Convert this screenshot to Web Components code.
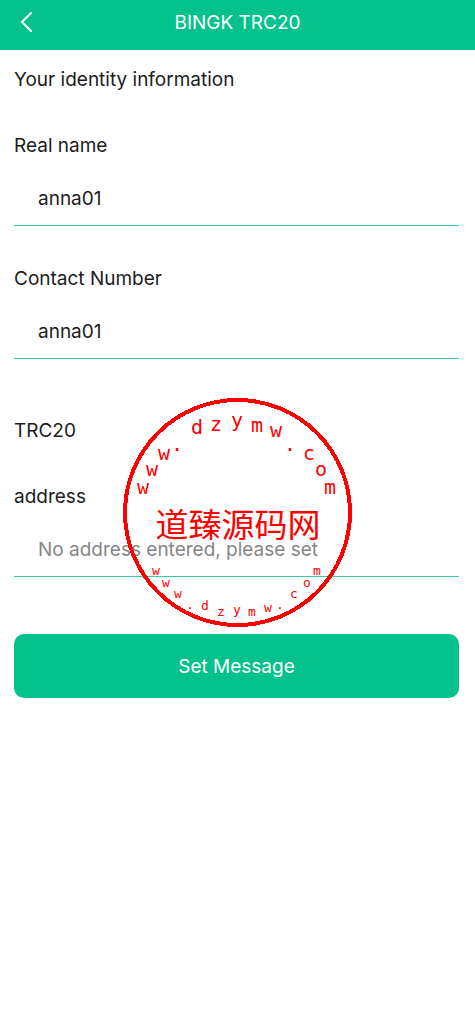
<!DOCTYPE html>
<html lang="en">
<head>
  <meta charset="UTF-8" />
  <meta name="viewport" content="width=device-width, initial-scale=1.0" />
  <title>BINGK TRC20</title>
  <style>
    body {
      margin: 0;
      background-color: #fff;
      color: #1c1c1c;
      font-family: Inter, "Noto Sans CJK SC", sans-serif;
      font-size: 19px;
      --main-color: #05c18b;
      --row-height: 60px;
    }
  </style>
</head>
<body>
  <wallet-page></wallet-page>

  <script>
    class NavBar extends HTMLElement {
      constructor() {
        super();
        this.shadowDOM = this.attachShadow({ mode: 'open' });
      }

      connectedCallback() {
        this.render();
      }

      render() {
        this.shadowDOM.innerHTML = `
          <style>
            :host {
              display: block;
              background-color: var(--main-color);
              color: #fff;
            }

            header {
              display: grid;
              grid-template-columns: 54px 1fr 54px;
              align-items: center;
              height: 50px;
              padding-bottom: 6px;
              box-sizing: border-box;
            }

            button {
              display: flex;
              justify-content: center;
              padding: 8px;
              border: none;
              background: none;
              color: inherit;
              cursor: pointer;
            }

            h1 {
              margin: 0;
              font-size: inherit;
              font-weight: 400;
              text-align: center;
            }
          </style>
          <header>
            <button type="button" aria-label="Back">
              <svg width="14" height="22" viewBox="0 0 14 22" fill="none" stroke="currentColor" stroke-width="2">
                <path d="M11 2 L2 11 L11 20" stroke-linecap="round" />
              </svg>
            </button>
            <h1><slot></slot></h1>
          </header>
        `;
      }
    }

    class FormField extends HTMLElement {
      constructor() {
        super();
        this.shadowDOM = this.attachShadow({ mode: 'open' });
      }

      connectedCallback() {
        this.render();
      }

      get value() {
        return this.shadowDOM.querySelector('#field-input').value;
      }

      render() {
        this.shadowDOM.innerHTML = `
          <style>
            :host {
              display: block;
            }

            label {
              display: block;
              line-height: var(--row-height);
              margin-bottom: 6px;
            }

            input {
              display: block;
              width: 100%;
              height: 44px;
              box-sizing: border-box;
              padding: 0 24px 10px;
              border: none;
              border-bottom: 1px solid #3cc99c;
              border-radius: 0;
              outline: none;
              background: none;
              color: inherit;
              font: inherit;
            }

            input::placeholder {
              color: #868686;
              opacity: 1;
            }
          </style>
          <label for="field-input">${this.getAttribute('label')}</label>
          <input
            id="field-input"
            type="text"
            value="${this.getAttribute('value') || ''}"
            placeholder="${this.getAttribute('placeholder') || ''}"
          />
        `;
      }
    }

    class SubmitButton extends HTMLElement {
      constructor() {
        super();
        this.shadowDOM = this.attachShadow({ mode: 'open' });
      }

      connectedCallback() {
        this.render();
      }

      render() {
        this.shadowDOM.innerHTML = `
          <style>
            :host {
              display: block;
            }

            button {
              display: block;
              width: 100%;
              height: 64px;
              border: none;
              border-radius: 10px;
              background-color: var(--main-color);
              color: #fff;
              font: inherit;
              cursor: pointer;
            }
          </style>
          <button type="button"><slot></slot></button>
        `;
      }
    }

    // every letter of the ring stays upright: [letter, x, baseline]
    const UPPER_ARC = [
      ['w', 20, 96], ['w', 29, 78], ['w', 41, 62], ['.', 54, 53],
      ['d', 74, 36], ['z', 93, 33], ['y', 114, 29], ['m', 134, 34], ['w', 153, 39],
      ['.', 167, 53], ['c', 186, 62], ['o', 198, 78], ['m', 207, 96],
    ];

    const LOWER_ARC = [
      ['w', 33, 177], ['w', 43, 189], ['w', 55, 200], ['.', 67, 211],
      ['d', 82, 212], ['z', 98, 218], ['y', 114, 216], ['m', 129, 218], ['w', 145, 214],
      ['.', 157, 211], ['c', 171, 200], ['o', 184, 189], ['m', 194, 177],
    ];

    class RoundStamp extends HTMLElement {
      constructor() {
        super();
        this.shadowDOM = this.attachShadow({ mode: 'open' });
      }

      connectedCallback() {
        this.render();
      }

      letters(arc) {
        return arc.map(([letter, x, y]) => `<text x="${x}" y="${y}">${letter}</text>`).join('');
      }

      render() {
        this.shadowDOM.innerHTML = `
          <style>
            :host {
              display: block;
              width: 229px;
              pointer-events: none;
            }

            svg {
              display: block;
              fill: #f00;
              text-anchor: middle;
            }

            circle {
              fill: none;
              stroke: #f00;
              stroke-width: 4px;
              shape-rendering: crispEdges;
            }

            .upper, .lower {
              font-family: "DejaVu Sans Mono", monospace;
            }

            .upper {
              font-size: 20px;
            }

            .lower {
              font-size: 13px;
            }

            .name {
              font-family: "Noto Sans CJK SC", sans-serif;
              font-size: 33px;
            }
          </style>
          <svg width="229" height="229" viewBox="0 0 229 229">
            <circle cx="114.5" cy="114.5" r="112.5" />
            <g class="upper">${this.letters(UPPER_ARC)}</g>
            <text class="name" x="115" y="139">${this.getAttribute('name')}</text>
            <g class="lower">${this.letters(LOWER_ARC)}</g>
          </svg>
        `;
      }
    }

    class WalletPage extends HTMLElement {
      constructor() {
        super();
        this.shadowDOM = this.attachShadow({ mode: 'open' });
      }

      connectedCallback() {
        this.render();
      }

      render() {
        this.shadowDOM.innerHTML = `
          <style>
            :host {
              display: block;
            }

            main {
              position: relative;
              padding: 0 16px 0 14px;
            }

            h2 {
              margin: 0 0 6px;
              font-size: inherit;
              font-weight: 400;
              line-height: var(--row-height);
            }

            .identity {
              display: flex;
              flex-direction: column;
              gap: 23px;
              margin-bottom: 42px;
            }

            submit-button {
              margin-top: 57px;
            }

            round-stamp {
              position: absolute;
              top: 348px;
              left: 0;
              right: 0;
              margin: 0 auto;
            }
          </style>
          <nav-bar>BINGK TRC20</nav-bar>
          <main>
            <h2>Your identity information</h2>
            <section class="identity">
              <form-field label="Real name" value="anna01"></form-field>
              <form-field label="Contact Number" value="anna01"></form-field>
            </section>
            <h2>TRC20</h2>
            <form-field label="address" placeholder="No address entered, please set"></form-field>
            <submit-button>Set Message</submit-button>
            <round-stamp name="道臻源码网"></round-stamp>
          </main>
        `;
      }
    }

    customElements.define('nav-bar', NavBar);
    customElements.define('form-field', FormField);
    customElements.define('submit-button', SubmitButton);
    customElements.define('round-stamp', RoundStamp);
    customElements.define('wallet-page', WalletPage);
  </script>
</body>
</html>
